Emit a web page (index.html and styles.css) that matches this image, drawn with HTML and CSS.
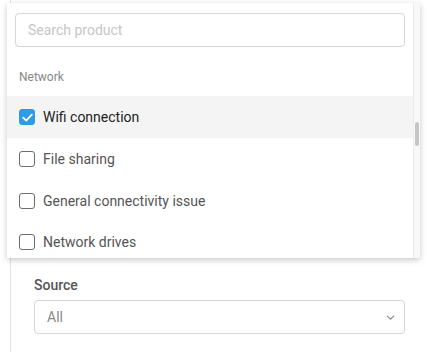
FILE: index.html
```html
<!DOCTYPE html>
<html lang="en">
<head>
    <meta charset="UTF-8">
    <meta name="viewport" content="width=device-width, initial-scale=1.0">
    <title>Product filter</title>
    <link rel="stylesheet" href="styles.css">
</head>
<body>
    <div class="page">
        <div class="panel">
            <div class="field">
                <label class="field-label">Source</label>
                <div class="select">
                    <span class="select-value">All</span>
                    <svg class="chevron" width="9" height="5" viewBox="0 0 9 5">
                        <path d="M1 0.8l3.5 3.4 3.5-3.4" fill="none" stroke="#8a8a8a" stroke-width="1.1"/>
                    </svg>
                </div>
            </div>
        </div>

        <div class="dropdown">
            <div class="dropdown-body">
                <input type="text" class="search" placeholder="Search product">
                <div class="group-label">Network</div>
                <ul class="options">
                    <li class="option active">
                        <span class="check checked">
                            <svg width="11" height="9" viewBox="0 0 11 9">
                                <path d="M1.2 4.6l3 3 5.6-6" fill="none" stroke="#fff" stroke-width="1.8" stroke-linecap="round" stroke-linejoin="round"/>
                            </svg>
                        </span>
                        Wifi connection
                    </li>
                    <li class="option"><span class="check"></span>File sharing</li>
                    <li class="option"><span class="check"></span>General connectivity issue</li>
                    <li class="option"><span class="check"></span>Network drives</li>
                </ul>
            </div>
            <div class="scrollbar">
                <div class="thumb"></div>
            </div>
        </div>
    </div>
</body>
</html>
```

FILE: styles.css
```css
body {
    margin: 0;
    background: #fff;
    font-family: 'Roboto', 'Liberation Sans', sans-serif;
    color: #222;
}

.page {
    position: relative;
    width: 427px;
    height: 352px;
    overflow: hidden;
}

.panel {
    margin-left: 10px;
    height: 352px;
    border-left: 1px solid #e2e2e2;
    padding: 276px 22px 0 23px;
    box-sizing: border-box;
}

.field-label {
    display: block;
    font-size: 14px;
    font-weight: 500;
    color: #555;
    line-height: 18px;
    margin-bottom: 6px;
}

.select {
    display: flex;
    align-items: center;
    justify-content: space-between;
    height: 34px;
    border: 1px solid #d6d6d6;
    border-radius: 4px;
    padding: 0 9px 0 12px;
    box-sizing: border-box;
}

.select-value {
    font-size: 14px;
    color: #8a8a8a;
}

/* dropdown overlay */
.dropdown {
    position: absolute;
    left: 7px;
    top: 3px;
    width: 413px;
    height: 255px;
    background: #fff;
    box-shadow: 0 2px 6px rgba(0, 0, 0, 0.22);
    display: flex;
    overflow: hidden;
}

.dropdown-body {
    flex: 1;
    padding-top: 10px;
}

.search {
    display: block;
    width: 390px;
    height: 34px;
    margin-left: 8px;
    border: 1px solid #d6d6d6;
    border-radius: 4px;
    padding: 0 12px;
    box-sizing: border-box;
    font-family: inherit;
    font-size: 14px;
    outline: none;
}

.search::placeholder {
    color: #c6c6c6;
}

.group-label {
    font-size: 12px;
    color: #888;
    line-height: 16px;
    padding: 22px 0 11px 12px;
}

.options {
    list-style: none;
    margin: 0;
    padding: 0;
}

.option {
    display: flex;
    align-items: center;
    gap: 8px;
    height: 42px;
    padding-left: 12px;
    font-size: 14px;
    color: #555;
}

.option:last-child {
    height: 36px;
    padding-top: 3px;
    box-sizing: border-box;
}

.option.active {
    background: #f4f4f4;
    color: #222;
}

.check {
    width: 16px;
    height: 16px;
    border: 1px solid #6e6e6e;
    border-radius: 3px;
    box-sizing: border-box;
    display: flex;
    align-items: center;
    justify-content: center;
}

.check.checked {
    background: #2d9be6;
    border-color: #2d9be6;
}

.scrollbar {
    width: 6px;
    border-left: 1px solid #ececec;
    background: #f8f8f8;
    padding-top: 119px;
}

.thumb {
    width: 4px;
    height: 24px;
    margin-left: 1px;
    border-radius: 2px;
    background: #c6c6c6;
}
```
